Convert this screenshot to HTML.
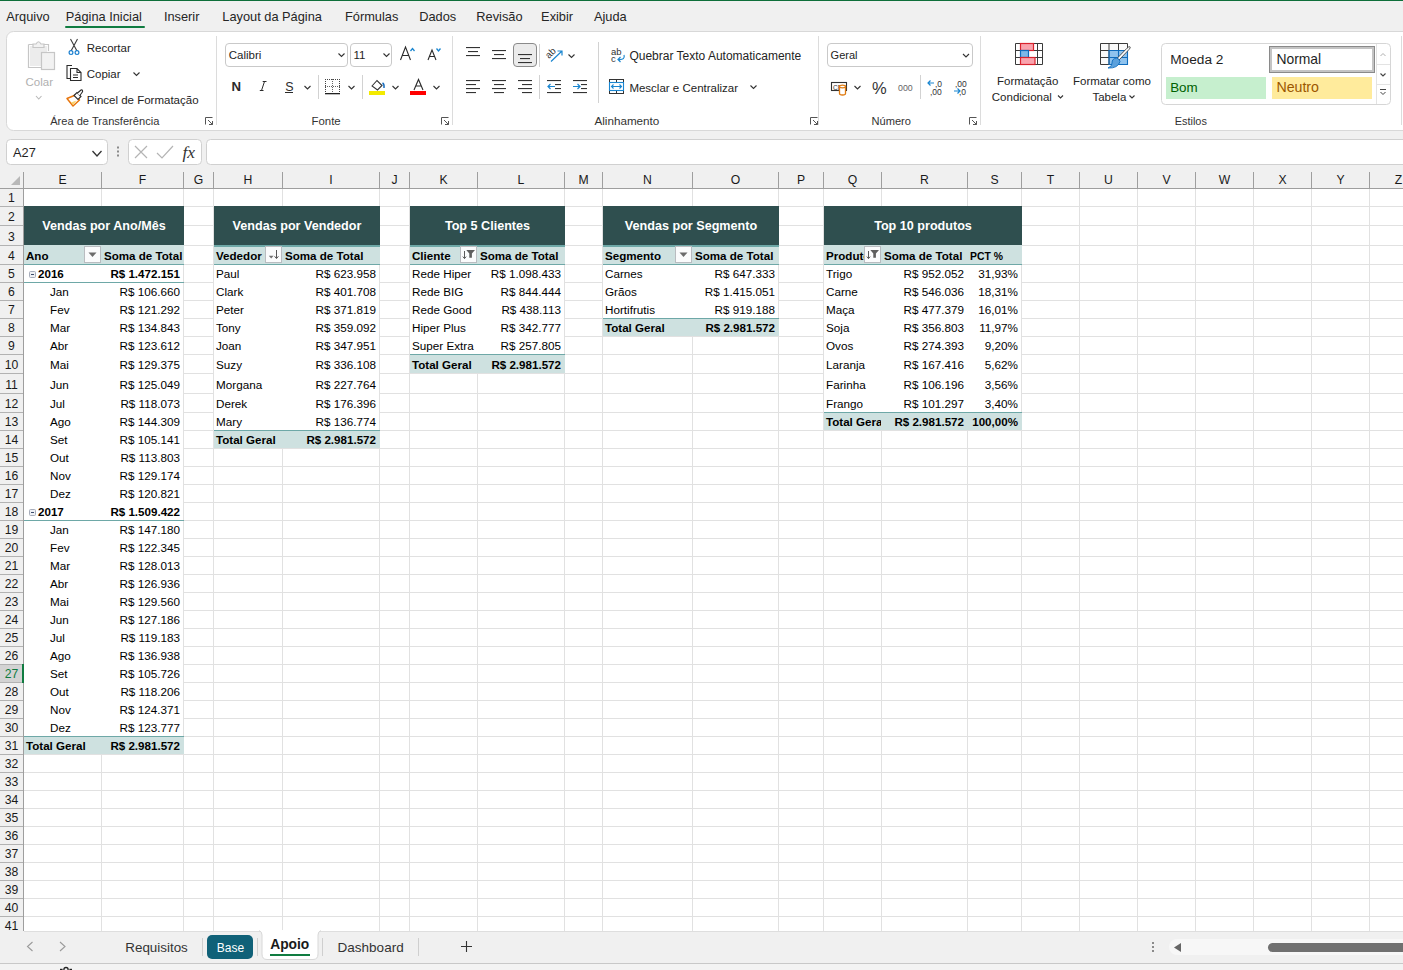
<!DOCTYPE html>
<html><head><meta charset="utf-8"><title>Excel - Apoio</title>
<style>
html,body{margin:0;padding:0;}
body{width:1403px;height:970px;overflow:hidden;position:relative;background:#f0f0f0;font-family:"Liberation Sans", sans-serif;}
.abs{position:absolute;}
svg text{font-family:"Liberation Sans", sans-serif;}
</style></head><body>
<svg class="abs" style="left:0;top:0" width="1403" height="970" viewBox="0 0 1403 970">
<g shape-rendering="crispEdges">
<rect x="24" y="189" width="1379" height="742" fill="#ffffff" />
<rect x="24" y="206" width="1379" height="1" fill="#e1e1e1" />
<rect x="24" y="225" width="1379" height="1" fill="#e1e1e1" />
<rect x="24" y="245" width="1379" height="1" fill="#e1e1e1" />
<rect x="24" y="264" width="1379" height="1" fill="#e1e1e1" />
<rect x="24" y="282" width="1379" height="1" fill="#e1e1e1" />
<rect x="24" y="300" width="1379" height="1" fill="#e1e1e1" />
<rect x="24" y="318" width="1379" height="1" fill="#e1e1e1" />
<rect x="24" y="336" width="1379" height="1" fill="#e1e1e1" />
<rect x="24" y="354" width="1379" height="1" fill="#e1e1e1" />
<rect x="24" y="373" width="1379" height="1" fill="#e1e1e1" />
<rect x="24" y="393" width="1379" height="1" fill="#e1e1e1" />
<rect x="24" y="412" width="1379" height="1" fill="#e1e1e1" />
<rect x="24" y="430" width="1379" height="1" fill="#e1e1e1" />
<rect x="24" y="448" width="1379" height="1" fill="#e1e1e1" />
<rect x="24" y="466" width="1379" height="1" fill="#e1e1e1" />
<rect x="24" y="484" width="1379" height="1" fill="#e1e1e1" />
<rect x="24" y="502" width="1379" height="1" fill="#e1e1e1" />
<rect x="24" y="520" width="1379" height="1" fill="#e1e1e1" />
<rect x="24" y="538" width="1379" height="1" fill="#e1e1e1" />
<rect x="24" y="556" width="1379" height="1" fill="#e1e1e1" />
<rect x="24" y="574" width="1379" height="1" fill="#e1e1e1" />
<rect x="24" y="592" width="1379" height="1" fill="#e1e1e1" />
<rect x="24" y="610" width="1379" height="1" fill="#e1e1e1" />
<rect x="24" y="628" width="1379" height="1" fill="#e1e1e1" />
<rect x="24" y="646" width="1379" height="1" fill="#e1e1e1" />
<rect x="24" y="664" width="1379" height="1" fill="#e1e1e1" />
<rect x="24" y="682" width="1379" height="1" fill="#e1e1e1" />
<rect x="24" y="700" width="1379" height="1" fill="#e1e1e1" />
<rect x="24" y="718" width="1379" height="1" fill="#e1e1e1" />
<rect x="24" y="736" width="1379" height="1" fill="#e1e1e1" />
<rect x="24" y="754" width="1379" height="1" fill="#e1e1e1" />
<rect x="24" y="772" width="1379" height="1" fill="#e1e1e1" />
<rect x="24" y="790" width="1379" height="1" fill="#e1e1e1" />
<rect x="24" y="808" width="1379" height="1" fill="#e1e1e1" />
<rect x="24" y="826" width="1379" height="1" fill="#e1e1e1" />
<rect x="24" y="844" width="1379" height="1" fill="#e1e1e1" />
<rect x="24" y="862" width="1379" height="1" fill="#e1e1e1" />
<rect x="24" y="880" width="1379" height="1" fill="#e1e1e1" />
<rect x="24" y="898" width="1379" height="1" fill="#e1e1e1" />
<rect x="24" y="916" width="1379" height="1" fill="#e1e1e1" />
<rect x="101" y="189" width="1" height="742" fill="#e1e1e1" />
<rect x="183" y="189" width="1" height="742" fill="#e1e1e1" />
<rect x="213" y="189" width="1" height="742" fill="#e1e1e1" />
<rect x="282" y="189" width="1" height="742" fill="#e1e1e1" />
<rect x="379" y="189" width="1" height="742" fill="#e1e1e1" />
<rect x="409" y="189" width="1" height="742" fill="#e1e1e1" />
<rect x="477" y="189" width="1" height="742" fill="#e1e1e1" />
<rect x="564" y="189" width="1" height="742" fill="#e1e1e1" />
<rect x="602" y="189" width="1" height="742" fill="#e1e1e1" />
<rect x="692" y="189" width="1" height="742" fill="#e1e1e1" />
<rect x="778" y="189" width="1" height="742" fill="#e1e1e1" />
<rect x="823" y="189" width="1" height="742" fill="#e1e1e1" />
<rect x="881" y="189" width="1" height="742" fill="#e1e1e1" />
<rect x="967" y="189" width="1" height="742" fill="#e1e1e1" />
<rect x="1021" y="189" width="1" height="742" fill="#e1e1e1" />
<rect x="1079" y="189" width="1" height="742" fill="#e1e1e1" />
<rect x="1137" y="189" width="1" height="742" fill="#e1e1e1" />
<rect x="1195" y="189" width="1" height="742" fill="#e1e1e1" />
<rect x="1253" y="189" width="1" height="742" fill="#e1e1e1" />
<rect x="1311" y="189" width="1" height="742" fill="#e1e1e1" />
<rect x="1369" y="189" width="1" height="742" fill="#e1e1e1" />
<rect x="1427" y="189" width="1" height="742" fill="#e1e1e1" />
<rect x="24" y="206" width="159" height="548" fill="#ffffff" />
<rect x="24" y="206" width="160" height="39" fill="#2f4f4f" />
<rect x="24" y="245" width="160" height="19" fill="#cee1e0" />
<rect x="24" y="736" width="160" height="18" fill="#cee1e0" />
<rect x="24" y="264" width="160" height="1" fill="#6ea8a7" />
<rect x="24" y="736" width="160" height="1" fill="#6ea8a7" />
<rect x="214" y="206" width="165" height="242" fill="#ffffff" />
<rect x="214" y="206" width="166" height="39" fill="#2f4f4f" />
<rect x="214" y="245" width="166" height="19" fill="#cee1e0" />
<rect x="214" y="430" width="166" height="18" fill="#cee1e0" />
<rect x="214" y="245" width="166" height="2" fill="#6ea8a7" />
<rect x="214" y="264" width="166" height="1" fill="#6ea8a7" />
<rect x="214" y="430" width="166" height="1" fill="#6ea8a7" />
<rect x="410" y="206" width="154" height="167" fill="#ffffff" />
<rect x="410" y="206" width="155" height="39" fill="#2f4f4f" />
<rect x="410" y="245" width="155" height="19" fill="#cee1e0" />
<rect x="410" y="354" width="155" height="19" fill="#cee1e0" />
<rect x="410" y="245" width="155" height="2" fill="#6ea8a7" />
<rect x="410" y="264" width="155" height="1" fill="#6ea8a7" />
<rect x="410" y="354" width="155" height="1" fill="#6ea8a7" />
<rect x="603" y="206" width="175" height="130" fill="#ffffff" />
<rect x="603" y="206" width="176" height="39" fill="#2f4f4f" />
<rect x="603" y="245" width="176" height="19" fill="#cee1e0" />
<rect x="603" y="318" width="176" height="18" fill="#cee1e0" />
<rect x="603" y="245" width="176" height="2" fill="#6ea8a7" />
<rect x="603" y="264" width="176" height="1" fill="#6ea8a7" />
<rect x="603" y="318" width="176" height="1" fill="#6ea8a7" />
<rect x="824" y="206" width="197" height="224" fill="#ffffff" />
<rect x="824" y="206" width="198" height="39" fill="#2f4f4f" />
<rect x="824" y="245" width="198" height="19" fill="#cee1e0" />
<rect x="824" y="412" width="198" height="18" fill="#cee1e0" />
<rect x="824" y="264" width="198" height="1" fill="#6ea8a7" />
<rect x="824" y="412" width="198" height="1" fill="#6ea8a7" />
<rect x="24" y="282" width="160" height="1" fill="#6ea8a7" />
<rect x="24" y="520" width="160" height="1" fill="#6ea8a7" />
</g>
<text x="104.0" y="230" font-size="12.6" fill="#ffffff" font-weight="bold" text-anchor="middle" >Vendas por Ano/Mês</text>
<text x="297.0" y="230" font-size="12.6" fill="#ffffff" font-weight="bold" text-anchor="middle" >Vendas por Vendedor</text>
<text x="487.5" y="230" font-size="12.6" fill="#ffffff" font-weight="bold" text-anchor="middle" >Top 5 Clientes</text>
<text x="691.0" y="230" font-size="12.6" fill="#ffffff" font-weight="bold" text-anchor="middle" >Vendas por Segmento</text>
<text x="923.0" y="230" font-size="12.6" fill="#ffffff" font-weight="bold" text-anchor="middle" >Top 10 produtos</text>
<text x="26" y="260" font-size="11.6" fill="#000" font-weight="bold" text-anchor="start" >Ano</text>
<rect x="84.5" y="246.5" width="16" height="16" fill="#fafbfc" stroke="#b9bcc0" stroke-width="1"/>
<path d="M88.5 252.5 L96.5 252.5 L92.5 257 Z" fill="#6b6b6b"/>
<text x="104" y="260" font-size="11.6" fill="#000" font-weight="bold" text-anchor="start" >Soma de Total</text>
<rect x="29.5" y="271.5" width="6" height="6" rx="1" fill="#eef0f4" stroke="#a7adbb"/>
<rect x="31" y="274" width="3" height="1" fill="#3a4a6a"/>
<text x="38" y="278" font-size="11.6" fill="#000" font-weight="bold" text-anchor="start" >2016</text>
<text x="180" y="278" font-size="11.6" fill="#000" font-weight="bold" text-anchor="end" >R$ 1.472.151</text>
<text x="50" y="296" font-size="11.7" fill="#000" text-anchor="start" >Jan</text>
<text x="180" y="296" font-size="11.7" fill="#000" text-anchor="end" >R$ 106.660</text>
<text x="50" y="314" font-size="11.7" fill="#000" text-anchor="start" >Fev</text>
<text x="180" y="314" font-size="11.7" fill="#000" text-anchor="end" >R$ 121.292</text>
<text x="50" y="332" font-size="11.7" fill="#000" text-anchor="start" >Mar</text>
<text x="180" y="332" font-size="11.7" fill="#000" text-anchor="end" >R$ 134.843</text>
<text x="50" y="350" font-size="11.7" fill="#000" text-anchor="start" >Abr</text>
<text x="180" y="350" font-size="11.7" fill="#000" text-anchor="end" >R$ 123.612</text>
<text x="50" y="369" font-size="11.7" fill="#000" text-anchor="start" >Mai</text>
<text x="180" y="369" font-size="11.7" fill="#000" text-anchor="end" >R$ 129.375</text>
<text x="50" y="389" font-size="11.7" fill="#000" text-anchor="start" >Jun</text>
<text x="180" y="389" font-size="11.7" fill="#000" text-anchor="end" >R$ 125.049</text>
<text x="50" y="408" font-size="11.7" fill="#000" text-anchor="start" >Jul</text>
<text x="180" y="408" font-size="11.7" fill="#000" text-anchor="end" >R$ 118.073</text>
<text x="50" y="426" font-size="11.7" fill="#000" text-anchor="start" >Ago</text>
<text x="180" y="426" font-size="11.7" fill="#000" text-anchor="end" >R$ 144.309</text>
<text x="50" y="444" font-size="11.7" fill="#000" text-anchor="start" >Set</text>
<text x="180" y="444" font-size="11.7" fill="#000" text-anchor="end" >R$ 105.141</text>
<text x="50" y="462" font-size="11.7" fill="#000" text-anchor="start" >Out</text>
<text x="180" y="462" font-size="11.7" fill="#000" text-anchor="end" >R$ 113.803</text>
<text x="50" y="480" font-size="11.7" fill="#000" text-anchor="start" >Nov</text>
<text x="180" y="480" font-size="11.7" fill="#000" text-anchor="end" >R$ 129.174</text>
<text x="50" y="498" font-size="11.7" fill="#000" text-anchor="start" >Dez</text>
<text x="180" y="498" font-size="11.7" fill="#000" text-anchor="end" >R$ 120.821</text>
<rect x="29.5" y="509.5" width="6" height="6" rx="1" fill="#eef0f4" stroke="#a7adbb"/>
<rect x="31" y="512" width="3" height="1" fill="#3a4a6a"/>
<text x="38" y="516" font-size="11.6" fill="#000" font-weight="bold" text-anchor="start" >2017</text>
<text x="180" y="516" font-size="11.6" fill="#000" font-weight="bold" text-anchor="end" >R$ 1.509.422</text>
<text x="50" y="534" font-size="11.7" fill="#000" text-anchor="start" >Jan</text>
<text x="180" y="534" font-size="11.7" fill="#000" text-anchor="end" >R$ 147.180</text>
<text x="50" y="552" font-size="11.7" fill="#000" text-anchor="start" >Fev</text>
<text x="180" y="552" font-size="11.7" fill="#000" text-anchor="end" >R$ 122.345</text>
<text x="50" y="570" font-size="11.7" fill="#000" text-anchor="start" >Mar</text>
<text x="180" y="570" font-size="11.7" fill="#000" text-anchor="end" >R$ 128.013</text>
<text x="50" y="588" font-size="11.7" fill="#000" text-anchor="start" >Abr</text>
<text x="180" y="588" font-size="11.7" fill="#000" text-anchor="end" >R$ 126.936</text>
<text x="50" y="606" font-size="11.7" fill="#000" text-anchor="start" >Mai</text>
<text x="180" y="606" font-size="11.7" fill="#000" text-anchor="end" >R$ 129.560</text>
<text x="50" y="624" font-size="11.7" fill="#000" text-anchor="start" >Jun</text>
<text x="180" y="624" font-size="11.7" fill="#000" text-anchor="end" >R$ 127.186</text>
<text x="50" y="642" font-size="11.7" fill="#000" text-anchor="start" >Jul</text>
<text x="180" y="642" font-size="11.7" fill="#000" text-anchor="end" >R$ 119.183</text>
<text x="50" y="660" font-size="11.7" fill="#000" text-anchor="start" >Ago</text>
<text x="180" y="660" font-size="11.7" fill="#000" text-anchor="end" >R$ 136.938</text>
<text x="50" y="678" font-size="11.7" fill="#000" text-anchor="start" >Set</text>
<text x="180" y="678" font-size="11.7" fill="#000" text-anchor="end" >R$ 105.726</text>
<text x="50" y="696" font-size="11.7" fill="#000" text-anchor="start" >Out</text>
<text x="180" y="696" font-size="11.7" fill="#000" text-anchor="end" >R$ 118.206</text>
<text x="50" y="714" font-size="11.7" fill="#000" text-anchor="start" >Nov</text>
<text x="180" y="714" font-size="11.7" fill="#000" text-anchor="end" >R$ 124.371</text>
<text x="50" y="732" font-size="11.7" fill="#000" text-anchor="start" >Dez</text>
<text x="180" y="732" font-size="11.7" fill="#000" text-anchor="end" >R$ 123.777</text>
<text x="26" y="750" font-size="11.6" fill="#000" font-weight="bold" text-anchor="start" >Total Geral</text>
<text x="180" y="750" font-size="11.6" fill="#000" font-weight="bold" text-anchor="end" >R$ 2.981.572</text>
<text x="216" y="260" font-size="11.6" fill="#000" font-weight="bold" text-anchor="start" >Vededor</text>
<rect x="265.5" y="246.5" width="16" height="16" fill="#fafbfc" stroke="#b9bcc0" stroke-width="1"/>
<path d="M268.8 255.8 L273.6 255.8 L271.2 258.6 Z" fill="#707070"/>
<rect x="276" y="250" width="1" height="8" fill="#555"/>
<path d="M274.6 256.3 L276.5 258.6 L278.4 256.3" fill="none" stroke="#555" stroke-width="1"/>
<text x="285" y="260" font-size="11.6" fill="#000" font-weight="bold" text-anchor="start" >Soma de Total</text>
<text x="216" y="278" font-size="11.7" fill="#000" text-anchor="start" >Paul</text>
<text x="376" y="278" font-size="11.7" fill="#000" text-anchor="end" >R$ 623.958</text>
<text x="216" y="296" font-size="11.7" fill="#000" text-anchor="start" >Clark</text>
<text x="376" y="296" font-size="11.7" fill="#000" text-anchor="end" >R$ 401.708</text>
<text x="216" y="314" font-size="11.7" fill="#000" text-anchor="start" >Peter</text>
<text x="376" y="314" font-size="11.7" fill="#000" text-anchor="end" >R$ 371.819</text>
<text x="216" y="332" font-size="11.7" fill="#000" text-anchor="start" >Tony</text>
<text x="376" y="332" font-size="11.7" fill="#000" text-anchor="end" >R$ 359.092</text>
<text x="216" y="350" font-size="11.7" fill="#000" text-anchor="start" >Joan</text>
<text x="376" y="350" font-size="11.7" fill="#000" text-anchor="end" >R$ 347.951</text>
<text x="216" y="369" font-size="11.7" fill="#000" text-anchor="start" >Suzy</text>
<text x="376" y="369" font-size="11.7" fill="#000" text-anchor="end" >R$ 336.108</text>
<text x="216" y="389" font-size="11.7" fill="#000" text-anchor="start" >Morgana</text>
<text x="376" y="389" font-size="11.7" fill="#000" text-anchor="end" >R$ 227.764</text>
<text x="216" y="408" font-size="11.7" fill="#000" text-anchor="start" >Derek</text>
<text x="376" y="408" font-size="11.7" fill="#000" text-anchor="end" >R$ 176.396</text>
<text x="216" y="426" font-size="11.7" fill="#000" text-anchor="start" >Mary</text>
<text x="376" y="426" font-size="11.7" fill="#000" text-anchor="end" >R$ 136.774</text>
<text x="216" y="444" font-size="11.6" fill="#000" font-weight="bold" text-anchor="start" >Total Geral</text>
<text x="376" y="444" font-size="11.6" fill="#000" font-weight="bold" text-anchor="end" >R$ 2.981.572</text>
<text x="412" y="260" font-size="11.6" fill="#000" font-weight="bold" text-anchor="start" >Cliente</text>
<rect x="460.5" y="246.5" width="16" height="16" fill="#fafbfc" stroke="#b9bcc0" stroke-width="1"/>
<rect x="464" y="251" width="1" height="7.5" fill="#5a5a5a"/>
<path d="M462.8 256.6 L464.5 258.6 L466.2 256.6" fill="none" stroke="#5a5a5a" stroke-width="1"/>
<path d="M466.3 250 L475 250 L471.9 253.5 L471.9 257.8 L469.3 257.8 L469.3 253.5 Z" fill="#5e5e5e"/>
<text x="480" y="260" font-size="11.6" fill="#000" font-weight="bold" text-anchor="start" >Soma de Total</text>
<text x="412" y="278" font-size="11.7" fill="#000" text-anchor="start" >Rede Hiper</text>
<text x="561" y="278" font-size="11.7" fill="#000" text-anchor="end" >R$ 1.098.433</text>
<text x="412" y="296" font-size="11.7" fill="#000" text-anchor="start" >Rede BIG</text>
<text x="561" y="296" font-size="11.7" fill="#000" text-anchor="end" >R$ 844.444</text>
<text x="412" y="314" font-size="11.7" fill="#000" text-anchor="start" >Rede Good</text>
<text x="561" y="314" font-size="11.7" fill="#000" text-anchor="end" >R$ 438.113</text>
<text x="412" y="332" font-size="11.7" fill="#000" text-anchor="start" >Hiper Plus</text>
<text x="561" y="332" font-size="11.7" fill="#000" text-anchor="end" >R$ 342.777</text>
<text x="412" y="350" font-size="11.7" fill="#000" text-anchor="start" >Super Extra</text>
<text x="561" y="350" font-size="11.7" fill="#000" text-anchor="end" >R$ 257.805</text>
<text x="412" y="369" font-size="11.6" fill="#000" font-weight="bold" text-anchor="start" >Total Geral</text>
<text x="561" y="369" font-size="11.6" fill="#000" font-weight="bold" text-anchor="end" >R$ 2.981.572</text>
<text x="605" y="260" font-size="11.6" fill="#000" font-weight="bold" text-anchor="start" >Segmento</text>
<rect x="675.5" y="246.5" width="16" height="16" fill="#fafbfc" stroke="#b9bcc0" stroke-width="1"/>
<path d="M679.5 252.5 L687.5 252.5 L683.5 257 Z" fill="#6b6b6b"/>
<text x="695" y="260" font-size="11.6" fill="#000" font-weight="bold" text-anchor="start" >Soma de Total</text>
<text x="605" y="278" font-size="11.7" fill="#000" text-anchor="start" >Carnes</text>
<text x="775" y="278" font-size="11.7" fill="#000" text-anchor="end" >R$ 647.333</text>
<text x="605" y="296" font-size="11.7" fill="#000" text-anchor="start" >Grãos</text>
<text x="775" y="296" font-size="11.7" fill="#000" text-anchor="end" >R$ 1.415.051</text>
<text x="605" y="314" font-size="11.7" fill="#000" text-anchor="start" >Hortifrutis</text>
<text x="775" y="314" font-size="11.7" fill="#000" text-anchor="end" >R$ 919.188</text>
<text x="605" y="332" font-size="11.6" fill="#000" font-weight="bold" text-anchor="start" >Total Geral</text>
<text x="775" y="332" font-size="11.6" fill="#000" font-weight="bold" text-anchor="end" >R$ 2.981.572</text>
<clipPath id="cq"><rect x="824" y="250" width="40" height="20"/></clipPath>
<g clip-path="url(#cq)">
<text x="826" y="260" font-size="11.6" fill="#000" font-weight="bold" text-anchor="start" >Produto</text>
</g>
<rect x="864.5" y="246.5" width="16" height="16" fill="#fafbfc" stroke="#b9bcc0" stroke-width="1"/>
<rect x="868" y="251" width="1" height="7.5" fill="#5a5a5a"/>
<path d="M866.8 256.6 L868.5 258.6 L870.2 256.6" fill="none" stroke="#5a5a5a" stroke-width="1"/>
<path d="M870.3 250 L879 250 L875.9 253.5 L875.9 257.8 L873.3 257.8 L873.3 253.5 Z" fill="#5e5e5e"/>
<text x="884" y="260" font-size="11.6" fill="#000" font-weight="bold" text-anchor="start" >Soma de Total</text>
<text x="970" y="260" font-size="10.4" fill="#000" font-weight="bold" text-anchor="start" >PCT %</text>
<text x="826" y="278" font-size="11.7" fill="#000" text-anchor="start" >Trigo</text>
<text x="964" y="278" font-size="11.7" fill="#000" text-anchor="end" >R$ 952.052</text>
<text x="1018" y="278" font-size="11.7" fill="#000" text-anchor="end" >31,93%</text>
<text x="826" y="296" font-size="11.7" fill="#000" text-anchor="start" >Carne</text>
<text x="964" y="296" font-size="11.7" fill="#000" text-anchor="end" >R$ 546.036</text>
<text x="1018" y="296" font-size="11.7" fill="#000" text-anchor="end" >18,31%</text>
<text x="826" y="314" font-size="11.7" fill="#000" text-anchor="start" >Maça</text>
<text x="964" y="314" font-size="11.7" fill="#000" text-anchor="end" >R$ 477.379</text>
<text x="1018" y="314" font-size="11.7" fill="#000" text-anchor="end" >16,01%</text>
<text x="826" y="332" font-size="11.7" fill="#000" text-anchor="start" >Soja</text>
<text x="964" y="332" font-size="11.7" fill="#000" text-anchor="end" >R$ 356.803</text>
<text x="1018" y="332" font-size="11.7" fill="#000" text-anchor="end" >11,97%</text>
<text x="826" y="350" font-size="11.7" fill="#000" text-anchor="start" >Ovos</text>
<text x="964" y="350" font-size="11.7" fill="#000" text-anchor="end" >R$ 274.393</text>
<text x="1018" y="350" font-size="11.7" fill="#000" text-anchor="end" >9,20%</text>
<text x="826" y="369" font-size="11.7" fill="#000" text-anchor="start" >Laranja</text>
<text x="964" y="369" font-size="11.7" fill="#000" text-anchor="end" >R$ 167.416</text>
<text x="1018" y="369" font-size="11.7" fill="#000" text-anchor="end" >5,62%</text>
<text x="826" y="389" font-size="11.7" fill="#000" text-anchor="start" >Farinha</text>
<text x="964" y="389" font-size="11.7" fill="#000" text-anchor="end" >R$ 106.196</text>
<text x="1018" y="389" font-size="11.7" fill="#000" text-anchor="end" >3,56%</text>
<text x="826" y="408" font-size="11.7" fill="#000" text-anchor="start" >Frango</text>
<text x="964" y="408" font-size="11.7" fill="#000" text-anchor="end" >R$ 101.297</text>
<text x="1018" y="408" font-size="11.7" fill="#000" text-anchor="end" >3,40%</text>
<clipPath id="cq2"><rect x="824" y="737" width="57" height="20"/></clipPath>
<clipPath id="cq3"><rect x="824" y="413" width="57" height="18"/></clipPath>
<g clip-path="url(#cq3)">
<text x="826" y="426" font-size="11.6" fill="#000" font-weight="bold" text-anchor="start" >Total Geral</text>
</g>
<text x="964" y="426" font-size="11.6" fill="#000" font-weight="bold" text-anchor="end" >R$ 2.981.572</text>
<text x="1018" y="426" font-size="11.6" fill="#000" font-weight="bold" text-anchor="end" >100,00%</text>
<g shape-rendering="crispEdges">
<rect x="0" y="165" width="1403" height="23" fill="#f0f0f0" />
<rect x="0" y="188" width="1403" height="1" fill="#9e9e9e" />
<rect x="101" y="172" width="1" height="16" fill="#9e9e9e" />
<rect x="183" y="172" width="1" height="16" fill="#9e9e9e" />
<rect x="213" y="172" width="1" height="16" fill="#9e9e9e" />
<rect x="282" y="172" width="1" height="16" fill="#9e9e9e" />
<rect x="379" y="172" width="1" height="16" fill="#9e9e9e" />
<rect x="409" y="172" width="1" height="16" fill="#9e9e9e" />
<rect x="477" y="172" width="1" height="16" fill="#9e9e9e" />
<rect x="564" y="172" width="1" height="16" fill="#9e9e9e" />
<rect x="602" y="172" width="1" height="16" fill="#9e9e9e" />
<rect x="692" y="172" width="1" height="16" fill="#9e9e9e" />
<rect x="778" y="172" width="1" height="16" fill="#9e9e9e" />
<rect x="823" y="172" width="1" height="16" fill="#9e9e9e" />
<rect x="881" y="172" width="1" height="16" fill="#9e9e9e" />
<rect x="967" y="172" width="1" height="16" fill="#9e9e9e" />
<rect x="1021" y="172" width="1" height="16" fill="#9e9e9e" />
<rect x="1079" y="172" width="1" height="16" fill="#9e9e9e" />
<rect x="1137" y="172" width="1" height="16" fill="#9e9e9e" />
<rect x="1195" y="172" width="1" height="16" fill="#9e9e9e" />
<rect x="1253" y="172" width="1" height="16" fill="#9e9e9e" />
<rect x="1311" y="172" width="1" height="16" fill="#9e9e9e" />
<rect x="1369" y="172" width="1" height="16" fill="#9e9e9e" />
<rect x="1427" y="172" width="1" height="16" fill="#9e9e9e" />
<rect x="0" y="189" width="23" height="742" fill="#f0f0f0" />
<rect x="23" y="172" width="1" height="759" fill="#9e9e9e" />
<rect x="0" y="206" width="23" height="1" fill="#b2b2b2" />
<rect x="0" y="225" width="23" height="1" fill="#b2b2b2" />
<rect x="0" y="245" width="23" height="1" fill="#b2b2b2" />
<rect x="0" y="264" width="23" height="1" fill="#b2b2b2" />
<rect x="0" y="282" width="23" height="1" fill="#b2b2b2" />
<rect x="0" y="300" width="23" height="1" fill="#b2b2b2" />
<rect x="0" y="318" width="23" height="1" fill="#b2b2b2" />
<rect x="0" y="336" width="23" height="1" fill="#b2b2b2" />
<rect x="0" y="354" width="23" height="1" fill="#b2b2b2" />
<rect x="0" y="373" width="23" height="1" fill="#b2b2b2" />
<rect x="0" y="393" width="23" height="1" fill="#b2b2b2" />
<rect x="0" y="412" width="23" height="1" fill="#b2b2b2" />
<rect x="0" y="430" width="23" height="1" fill="#b2b2b2" />
<rect x="0" y="448" width="23" height="1" fill="#b2b2b2" />
<rect x="0" y="466" width="23" height="1" fill="#b2b2b2" />
<rect x="0" y="484" width="23" height="1" fill="#b2b2b2" />
<rect x="0" y="502" width="23" height="1" fill="#b2b2b2" />
<rect x="0" y="520" width="23" height="1" fill="#b2b2b2" />
<rect x="0" y="538" width="23" height="1" fill="#b2b2b2" />
<rect x="0" y="556" width="23" height="1" fill="#b2b2b2" />
<rect x="0" y="574" width="23" height="1" fill="#b2b2b2" />
<rect x="0" y="592" width="23" height="1" fill="#b2b2b2" />
<rect x="0" y="610" width="23" height="1" fill="#b2b2b2" />
<rect x="0" y="628" width="23" height="1" fill="#b2b2b2" />
<rect x="0" y="646" width="23" height="1" fill="#b2b2b2" />
<rect x="0" y="664" width="23" height="1" fill="#b2b2b2" />
<rect x="0" y="682" width="23" height="1" fill="#b2b2b2" />
<rect x="0" y="700" width="23" height="1" fill="#b2b2b2" />
<rect x="0" y="718" width="23" height="1" fill="#b2b2b2" />
<rect x="0" y="736" width="23" height="1" fill="#b2b2b2" />
<rect x="0" y="754" width="23" height="1" fill="#b2b2b2" />
<rect x="0" y="772" width="23" height="1" fill="#b2b2b2" />
<rect x="0" y="790" width="23" height="1" fill="#b2b2b2" />
<rect x="0" y="808" width="23" height="1" fill="#b2b2b2" />
<rect x="0" y="826" width="23" height="1" fill="#b2b2b2" />
<rect x="0" y="844" width="23" height="1" fill="#b2b2b2" />
<rect x="0" y="862" width="23" height="1" fill="#b2b2b2" />
<rect x="0" y="880" width="23" height="1" fill="#b2b2b2" />
<rect x="0" y="898" width="23" height="1" fill="#b2b2b2" />
<rect x="0" y="916" width="23" height="1" fill="#b2b2b2" />
<rect x="0" y="665" width="22" height="17" fill="#d3d3d3" />
<rect x="22" y="664" width="2" height="19" fill="#107c41" />
</g>
<path d="M11 185 L20 185 L20 176 Z" fill="#b8b8b8"/>
<text x="62.5" y="184" font-size="12.2" fill="#1a1a1a" text-anchor="middle" >E</text>
<text x="142.5" y="184" font-size="12.2" fill="#1a1a1a" text-anchor="middle" >F</text>
<text x="198.5" y="184" font-size="12.2" fill="#1a1a1a" text-anchor="middle" >G</text>
<text x="248.0" y="184" font-size="12.2" fill="#1a1a1a" text-anchor="middle" >H</text>
<text x="331.0" y="184" font-size="12.2" fill="#1a1a1a" text-anchor="middle" >I</text>
<text x="394.5" y="184" font-size="12.2" fill="#1a1a1a" text-anchor="middle" >J</text>
<text x="443.5" y="184" font-size="12.2" fill="#1a1a1a" text-anchor="middle" >K</text>
<text x="521.0" y="184" font-size="12.2" fill="#1a1a1a" text-anchor="middle" >L</text>
<text x="583.5" y="184" font-size="12.2" fill="#1a1a1a" text-anchor="middle" >M</text>
<text x="647.5" y="184" font-size="12.2" fill="#1a1a1a" text-anchor="middle" >N</text>
<text x="735.5" y="184" font-size="12.2" fill="#1a1a1a" text-anchor="middle" >O</text>
<text x="801.0" y="184" font-size="12.2" fill="#1a1a1a" text-anchor="middle" >P</text>
<text x="852.5" y="184" font-size="12.2" fill="#1a1a1a" text-anchor="middle" >Q</text>
<text x="924.5" y="184" font-size="12.2" fill="#1a1a1a" text-anchor="middle" >R</text>
<text x="994.5" y="184" font-size="12.2" fill="#1a1a1a" text-anchor="middle" >S</text>
<text x="1050.5" y="184" font-size="12.2" fill="#1a1a1a" text-anchor="middle" >T</text>
<text x="1108.5" y="184" font-size="12.2" fill="#1a1a1a" text-anchor="middle" >U</text>
<text x="1166.5" y="184" font-size="12.2" fill="#1a1a1a" text-anchor="middle" >V</text>
<text x="1224.5" y="184" font-size="12.2" fill="#1a1a1a" text-anchor="middle" >W</text>
<text x="1282.5" y="184" font-size="12.2" fill="#1a1a1a" text-anchor="middle" >X</text>
<text x="1340.5" y="184" font-size="12.2" fill="#1a1a1a" text-anchor="middle" >Y</text>
<text x="1398.5" y="184" font-size="12.2" fill="#1a1a1a" text-anchor="middle" >Z</text>
<text x="11.5" y="202" font-size="12.2" fill="#1a1a1a" text-anchor="middle" >1</text>
<text x="11.5" y="221" font-size="12.2" fill="#1a1a1a" text-anchor="middle" >2</text>
<text x="11.5" y="241" font-size="12.2" fill="#1a1a1a" text-anchor="middle" >3</text>
<text x="11.5" y="260" font-size="12.2" fill="#1a1a1a" text-anchor="middle" >4</text>
<text x="11.5" y="278" font-size="12.2" fill="#1a1a1a" text-anchor="middle" >5</text>
<text x="11.5" y="296" font-size="12.2" fill="#1a1a1a" text-anchor="middle" >6</text>
<text x="11.5" y="314" font-size="12.2" fill="#1a1a1a" text-anchor="middle" >7</text>
<text x="11.5" y="332" font-size="12.2" fill="#1a1a1a" text-anchor="middle" >8</text>
<text x="11.5" y="350" font-size="12.2" fill="#1a1a1a" text-anchor="middle" >9</text>
<text x="11.5" y="369" font-size="12.2" fill="#1a1a1a" text-anchor="middle" >10</text>
<text x="11.5" y="389" font-size="12.2" fill="#1a1a1a" text-anchor="middle" >11</text>
<text x="11.5" y="408" font-size="12.2" fill="#1a1a1a" text-anchor="middle" >12</text>
<text x="11.5" y="426" font-size="12.2" fill="#1a1a1a" text-anchor="middle" >13</text>
<text x="11.5" y="444" font-size="12.2" fill="#1a1a1a" text-anchor="middle" >14</text>
<text x="11.5" y="462" font-size="12.2" fill="#1a1a1a" text-anchor="middle" >15</text>
<text x="11.5" y="480" font-size="12.2" fill="#1a1a1a" text-anchor="middle" >16</text>
<text x="11.5" y="498" font-size="12.2" fill="#1a1a1a" text-anchor="middle" >17</text>
<text x="11.5" y="516" font-size="12.2" fill="#1a1a1a" text-anchor="middle" >18</text>
<text x="11.5" y="534" font-size="12.2" fill="#1a1a1a" text-anchor="middle" >19</text>
<text x="11.5" y="552" font-size="12.2" fill="#1a1a1a" text-anchor="middle" >20</text>
<text x="11.5" y="570" font-size="12.2" fill="#1a1a1a" text-anchor="middle" >21</text>
<text x="11.5" y="588" font-size="12.2" fill="#1a1a1a" text-anchor="middle" >22</text>
<text x="11.5" y="606" font-size="12.2" fill="#1a1a1a" text-anchor="middle" >23</text>
<text x="11.5" y="624" font-size="12.2" fill="#1a1a1a" text-anchor="middle" >24</text>
<text x="11.5" y="642" font-size="12.2" fill="#1a1a1a" text-anchor="middle" >25</text>
<text x="11.5" y="660" font-size="12.2" fill="#1a1a1a" text-anchor="middle" >26</text>
<text x="11.5" y="678" font-size="12.2" fill="#107c41" text-anchor="middle" >27</text>
<text x="11.5" y="696" font-size="12.2" fill="#1a1a1a" text-anchor="middle" >28</text>
<text x="11.5" y="714" font-size="12.2" fill="#1a1a1a" text-anchor="middle" >29</text>
<text x="11.5" y="732" font-size="12.2" fill="#1a1a1a" text-anchor="middle" >30</text>
<text x="11.5" y="750" font-size="12.2" fill="#1a1a1a" text-anchor="middle" >31</text>
<text x="11.5" y="768" font-size="12.2" fill="#1a1a1a" text-anchor="middle" >32</text>
<text x="11.5" y="786" font-size="12.2" fill="#1a1a1a" text-anchor="middle" >33</text>
<text x="11.5" y="804" font-size="12.2" fill="#1a1a1a" text-anchor="middle" >34</text>
<text x="11.5" y="822" font-size="12.2" fill="#1a1a1a" text-anchor="middle" >35</text>
<text x="11.5" y="840" font-size="12.2" fill="#1a1a1a" text-anchor="middle" >36</text>
<text x="11.5" y="858" font-size="12.2" fill="#1a1a1a" text-anchor="middle" >37</text>
<text x="11.5" y="876" font-size="12.2" fill="#1a1a1a" text-anchor="middle" >38</text>
<text x="11.5" y="894" font-size="12.2" fill="#1a1a1a" text-anchor="middle" >39</text>
<text x="11.5" y="912" font-size="12.2" fill="#1a1a1a" text-anchor="middle" >40</text>
<text x="11.5" y="930" font-size="12.2" fill="#1a1a1a" text-anchor="middle" >41</text>
<g shape-rendering="crispEdges">
<rect x="0" y="0" width="1403" height="1" fill="#0e6f3a" />
</g>
<text x="6.3" y="21" font-size="12.8" fill="#262626" text-anchor="start" >Arquivo</text>
<text x="65.8" y="21" font-size="12.8" fill="#262626" text-anchor="start" >Página Inicial</text>
<text x="163.9" y="21" font-size="12.8" fill="#262626" text-anchor="start" >Inserir</text>
<text x="222.3" y="21" font-size="12.8" fill="#262626" text-anchor="start" >Layout da Página</text>
<text x="345" y="21" font-size="12.8" fill="#262626" text-anchor="start" >Fórmulas</text>
<text x="419.2" y="21" font-size="12.8" fill="#262626" text-anchor="start" >Dados</text>
<text x="476.3" y="21" font-size="12.8" fill="#262626" text-anchor="start" >Revisão</text>
<text x="541.1" y="21" font-size="12.8" fill="#262626" text-anchor="start" >Exibir</text>
<text x="593.9" y="21" font-size="12.8" fill="#262626" text-anchor="start" >Ajuda</text>
<rect x="65" y="26" width="80" height="2" rx="1" fill="#107c41"/>
<rect x="6.5" y="31.5" width="1420" height="99" rx="7" fill="#ffffff" stroke="#d8d8d8"/>
<g shape-rendering="crispEdges">
<rect x="216" y="36" width="1" height="89" fill="#dcdcdc" />
<rect x="452" y="36" width="1" height="89" fill="#dcdcdc" />
<rect x="818" y="36" width="1" height="89" fill="#dcdcdc" />
<rect x="980" y="36" width="1" height="89" fill="#dcdcdc" />
<rect x="1401" y="36" width="1" height="89" fill="#dcdcdc" />
</g>
<text x="50.2" y="124.5" font-size="11.1" fill="#333333" text-anchor="start" >Área de Transferência</text>
<text x="311.5" y="124.5" font-size="11.4" fill="#333333" text-anchor="start" >Fonte</text>
<text x="594.4" y="124.5" font-size="11.7" fill="#333333" text-anchor="start" >Alinhamento</text>
<text x="871.5" y="124.5" font-size="11.1" fill="#333333" text-anchor="start" >Número</text>
<text x="1174.8" y="124.5" font-size="10.9" fill="#333333" text-anchor="start" >Estilos</text>
<path d="M205.5 124.5 L205.5 117.5 L212.5 117.5" fill="none" stroke="#555" stroke-width="1"/>
<path d="M208 120 L212.5 124.5 M209 124.5 L212.5 124.5 L212.5 121" fill="none" stroke="#555" stroke-width="1"/>
<path d="M441.5 124.5 L441.5 117.5 L448.5 117.5" fill="none" stroke="#555" stroke-width="1"/>
<path d="M444 120 L448.5 124.5 M445 124.5 L448.5 124.5 L448.5 121" fill="none" stroke="#555" stroke-width="1"/>
<path d="M810.5 124.5 L810.5 117.5 L817.5 117.5" fill="none" stroke="#555" stroke-width="1"/>
<path d="M813 120 L817.5 124.5 M814 124.5 L817.5 124.5 L817.5 121" fill="none" stroke="#555" stroke-width="1"/>
<path d="M969.5 124.5 L969.5 117.5 L976.5 117.5" fill="none" stroke="#555" stroke-width="1"/>
<path d="M972 120 L976.5 124.5 M973 124.5 L976.5 124.5 L976.5 121" fill="none" stroke="#555" stroke-width="1"/>
<path d="M28.5 44.5 H33 M44 44.5 H48.5 V51" fill="none" stroke="#c6c6c6" stroke-width="1.2"/>
<path d="M28.5 44.5 V67.5 H41" fill="none" stroke="#c6c6c6" stroke-width="1.2"/>
<rect x="30" y="46" width="17" height="20" fill="#ececec"/>
<rect x="41.5" y="52.5" width="13" height="17" fill="#f2f2f2" stroke="#c6c6c6" stroke-width="1.2"/>
<path d="M33 47.5 V44 H36 Q38.5 39.5 41 44 H44 V47.5 Z" fill="#f2f2f2" stroke="#c6c6c6" stroke-width="1.2"/>
<text x="25.5" y="85.5" font-size="11.5" fill="#b0b0b0" text-anchor="start" >Colar</text>
<path d="M36 96 L38.75 99 L41.5 96" fill="none" stroke="#b8b8b8" stroke-width="1.1"/>
<path d="M70.5 39 L77 51 M77.5 39 L71 51" stroke="#3c3c3c" stroke-width="1.1" fill="none"/>
<circle cx="71" cy="52.6" r="1.9" fill="none" stroke="#1a7fd0" stroke-width="1.2"/>
<circle cx="77" cy="52.6" r="1.9" fill="none" stroke="#1a7fd0" stroke-width="1.2"/>
<text x="86.7" y="51.7" font-size="11.5" fill="#242424" text-anchor="start" >Recortar</text>
<path d="M72 65.5 H67 V78.5 H70" fill="none" stroke="#2b2b2b" stroke-width="1.1"/>
<path d="M70.5 68.5 H77 L81 72.5 V80.5 H70.5 Z M77 68.5 V72.5 H81" fill="#fff" stroke="#2b2b2b" stroke-width="1.1"/>
<path d="M73 75 H78 M73 77.5 H78" stroke="#2b2b2b" stroke-width="1"/>
<text x="86.7" y="77.6" font-size="11.5" fill="#242424" text-anchor="start" >Copiar</text>
<path d="M133.5 72.5 L136.5 75.5 L139.5 72.5" fill="none" stroke="#333" stroke-width="1.1"/>
<path d="M67 98.5 L75.5 95 L79.5 100 L73 106 Z" fill="#fff" stroke="#e8750c" stroke-width="1.5" stroke-linejoin="round"/>
<path d="M71 102.5 L76.5 100.5 L73 105 Z" fill="#f9d36b"/>
<path d="M74 95.5 L77 92.5 L81 96.5 L78 99.5 Z" fill="#fff" stroke="#2b2b2b" stroke-width="1.1"/>
<path d="M77.5 93 L81 90 Q82 89.5 82.5 90.5 Q83 91.5 82 92.5 L79.5 96" fill="#fff" stroke="#2b2b2b" stroke-width="1.1"/>
<text x="86.7" y="103.5" font-size="11.5" fill="#242424" text-anchor="start" >Pincel de Formatação</text>
<rect x="225.5" y="43.5" width="122" height="23" rx="3.5" fill="#fff" stroke="#c9c9c9"/>
<text x="228.7" y="59" font-size="11.5" fill="#242424" text-anchor="start" >Calibri</text>
<path d="M338.5 53.5 L341.5 56.5 L344.5 53.5" fill="none" stroke="#333" stroke-width="1.1"/>
<rect x="350.5" y="43.5" width="41" height="23" rx="3.5" fill="#fff" stroke="#c9c9c9"/>
<text x="353.5" y="59" font-size="11.5" fill="#242424" text-anchor="start" >11</text>
<path d="M383.5 53.5 L386.5 56.5 L389.5 53.5" fill="none" stroke="#333" stroke-width="1.1"/>
<path d="M400.5 60 L405.5 47 L410.5 60 M402.3 55.5 H408.7" fill="none" stroke="#2b2b2b" stroke-width="1.1"/>
<path d="M410.5 51 L412.5 48.5 L414.5 51" fill="none" stroke="#1a86d0" stroke-width="1.3"/>
<path d="M428 60 L432 50 L436 60 M429.5 56.5 H434.5" fill="none" stroke="#2b2b2b" stroke-width="1.1"/>
<path d="M436.5 48.5 L438.5 51 L440.5 48.5" fill="none" stroke="#1a86d0" stroke-width="1.3"/>
<text x="231.5" y="91" font-size="13.2" fill="#2b2b2b" font-weight="bold" text-anchor="start" >N</text>
<path d="M261.5 90.5 L264.5 81.5 M259.8 90.5 H263.5 M262.7 81.5 H266.5" fill="none" stroke="#2b2b2b" stroke-width="1"/>
<text x="285.3" y="90.5" font-size="12.5" fill="#2b2b2b" text-anchor="start" >S</text>
<rect x="285" y="92" width="8" height="1" fill="#2b2b2b"/>
<path d="M304.5 86 L307.5 89 L310.5 86" fill="none" stroke="#333" stroke-width="1.1"/>
<g shape-rendering="crispEdges">
<rect x="318" y="75" width="1" height="24" fill="#d2d2d2" />
<rect x="362" y="75" width="1" height="24" fill="#d2d2d2" />
</g>
<rect x="325" y="79" width="1" height="1" fill="#444"/>
<rect x="325" y="86" width="1" height="1" fill="#666"/>
<rect x="327" y="79" width="1" height="1" fill="#444"/>
<rect x="327" y="86" width="1" height="1" fill="#666"/>
<rect x="329" y="79" width="1" height="1" fill="#444"/>
<rect x="329" y="86" width="1" height="1" fill="#666"/>
<rect x="331" y="79" width="1" height="1" fill="#444"/>
<rect x="331" y="86" width="1" height="1" fill="#666"/>
<rect x="333" y="79" width="1" height="1" fill="#444"/>
<rect x="333" y="86" width="1" height="1" fill="#666"/>
<rect x="335" y="79" width="1" height="1" fill="#444"/>
<rect x="335" y="86" width="1" height="1" fill="#666"/>
<rect x="337" y="79" width="1" height="1" fill="#444"/>
<rect x="337" y="86" width="1" height="1" fill="#666"/>
<rect x="339" y="79" width="1" height="1" fill="#444"/>
<rect x="339" y="86" width="1" height="1" fill="#666"/>
<rect x="325" y="79" width="1" height="1" fill="#444"/>
<rect x="339" y="79" width="1" height="1" fill="#444"/>
<rect x="332" y="79" width="1" height="1" fill="#666"/>
<rect x="325" y="81" width="1" height="1" fill="#444"/>
<rect x="339" y="81" width="1" height="1" fill="#444"/>
<rect x="332" y="81" width="1" height="1" fill="#666"/>
<rect x="325" y="83" width="1" height="1" fill="#444"/>
<rect x="339" y="83" width="1" height="1" fill="#444"/>
<rect x="332" y="83" width="1" height="1" fill="#666"/>
<rect x="325" y="85" width="1" height="1" fill="#444"/>
<rect x="339" y="85" width="1" height="1" fill="#444"/>
<rect x="332" y="85" width="1" height="1" fill="#666"/>
<rect x="325" y="87" width="1" height="1" fill="#444"/>
<rect x="339" y="87" width="1" height="1" fill="#444"/>
<rect x="332" y="87" width="1" height="1" fill="#666"/>
<rect x="325" y="89" width="1" height="1" fill="#444"/>
<rect x="339" y="89" width="1" height="1" fill="#444"/>
<rect x="332" y="89" width="1" height="1" fill="#666"/>
<rect x="325" y="91" width="1" height="1" fill="#444"/>
<rect x="339" y="91" width="1" height="1" fill="#444"/>
<rect x="332" y="91" width="1" height="1" fill="#666"/>
<rect x="325" y="93" width="15" height="1.3" fill="#222"/>
<path d="M348.5 86 L351.5 89 L354.5 86" fill="none" stroke="#333" stroke-width="1.1"/>
<path d="M372 86 L377 80.5 L382 85.5 L377.5 90 Z" fill="#fff" stroke="#333" stroke-width="1.1"/>
<path d="M382.5 83 Q384.5 84 384 88" fill="none" stroke="#1a6fc0" stroke-width="1.5"/>
<rect x="369" y="91" width="16" height="4" fill="#f3ea00"/>
<path d="M392.5 86 L395.5 89 L398.5 86" fill="none" stroke="#333" stroke-width="1.1"/>
<path d="M414 90 L418.5 79.5 L423 90 M415.7 86 H421.3" fill="none" stroke="#2b2b2b" stroke-width="1.1"/>
<rect x="410" y="91" width="16" height="4" fill="#ff0000"/>
<path d="M433.5 86 L436.5 89 L439.5 86" fill="none" stroke="#333" stroke-width="1.1"/>
<rect x="466" y="47" width="14" height="1.1" fill="#333"/>
<rect x="468" y="51" width="10" height="1.1" fill="#333"/>
<rect x="466" y="55" width="14" height="1.1" fill="#333"/>
<rect x="492" y="50" width="14" height="1.1" fill="#333"/>
<rect x="494" y="54" width="10" height="1.1" fill="#333"/>
<rect x="492" y="58" width="14" height="1.1" fill="#333"/>
<rect x="513.5" y="43.5" width="23" height="23" rx="3.5" fill="#ebebeb" stroke="#8a8a8a"/>
<rect x="518" y="54" width="14" height="1.1" fill="#333"/>
<rect x="520" y="58" width="10" height="1.1" fill="#333"/>
<rect x="518" y="62" width="14" height="1.1" fill="#333"/>
<g shape-rendering="crispEdges">
<rect x="539" y="44" width="1" height="23" fill="#d2d2d2" />
<rect x="539" y="75" width="1" height="24" fill="#d2d2d2" />
<rect x="598" y="42" width="1" height="61" fill="#d2d2d2" />
</g>
<text x="0" y="0" font-size="9.5" fill="#333" transform="translate(549 59) rotate(-45)">ab</text>
<path d="M551 61.5 L562 51 M557.5 51 H562 V55.5" fill="none" stroke="#1a86d0" stroke-width="1.2"/>
<path d="M568.5 54.5 L571.5 57.5 L574.5 54.5" fill="none" stroke="#333" stroke-width="1.1"/>
<rect x="466" y="80" width="14" height="1.1" fill="#333"/>
<rect x="466" y="84" width="10" height="1.1" fill="#333"/>
<rect x="466" y="88" width="14" height="1.1" fill="#333"/>
<rect x="466" y="92" width="10" height="1.1" fill="#333"/>
<rect x="492" y="80" width="14" height="1.1" fill="#333"/>
<rect x="494" y="84" width="10" height="1.1" fill="#333"/>
<rect x="492" y="88" width="14" height="1.1" fill="#333"/>
<rect x="494" y="92" width="10" height="1.1" fill="#333"/>
<rect x="518" y="80" width="14" height="1.1" fill="#333"/>
<rect x="522" y="84" width="10" height="1.1" fill="#333"/>
<rect x="518" y="88" width="14" height="1.1" fill="#333"/>
<rect x="522" y="92" width="10" height="1.1" fill="#333"/>
<rect x="547" y="80" width="14" height="1.1" fill="#333"/>
<rect x="555" y="84" width="6" height="1.1" fill="#333"/>
<rect x="555" y="88" width="6" height="1.1" fill="#333"/>
<rect x="547" y="92" width="14" height="1.1" fill="#333"/>
<path d="M555 86.5 H548 M550.5 84 L548 86.5 L550.5 89" fill="none" stroke="#1a86d0" stroke-width="1.2"/>
<rect x="573" y="80" width="14" height="1.1" fill="#333"/>
<rect x="581" y="84" width="6" height="1.1" fill="#333"/>
<rect x="581" y="88" width="6" height="1.1" fill="#333"/>
<rect x="573" y="92" width="14" height="1.1" fill="#333"/>
<path d="M573 86.5 H580 M577.5 84 L580 86.5 L577.5 89" fill="none" stroke="#1a86d0" stroke-width="1.2"/>
<text x="611" y="55" font-size="9.5" fill="#333">ab</text><text x="611" y="62" font-size="9.5" fill="#333">c</text>
<path d="M624 55 Q625.5 60 618.5 59.5 M620.5 57 L618 59.5 L620.5 62" fill="none" stroke="#1a86d0" stroke-width="1.2"/>
<text x="629.4" y="60" font-size="12.0" fill="#242424" text-anchor="start" >Quebrar Texto Automaticamente</text>
<rect x="609.5" y="79.5" width="14" height="14" fill="none" stroke="#333" stroke-width="1"/>
<path d="M616.5 80 V82 M616.5 91 V93" stroke="#333" stroke-width="1"/>
<rect x="609.5" y="82.5" width="14" height="8" fill="#fff" stroke="#1a86d0" stroke-width="1.1"/>
<path d="M611.5 86.5 H621.5 M613.5 84.5 L611.5 86.5 L613.5 88.5 M619.5 84.5 L621.5 86.5 L619.5 88.5" fill="none" stroke="#1a86d0" stroke-width="1.1"/>
<text x="629.4" y="92" font-size="11.5" fill="#242424" text-anchor="start" >Mesclar e Centralizar</text>
<path d="M750.5 85.5 L753.5 88.5 L756.5 85.5" fill="none" stroke="#333" stroke-width="1.1"/>
<rect x="827.5" y="43.5" width="145" height="23" rx="3.5" fill="#fff" stroke="#c9c9c9"/>
<text x="830.6" y="58.5" font-size="11.0" fill="#242424" text-anchor="start" >Geral</text>
<path d="M963 54 L966.0 57 L969 54" fill="none" stroke="#333" stroke-width="1.1"/>
<rect x="831.5" y="82.5" width="15" height="8" fill="none" stroke="#333" stroke-width="1.1"/>
<text x="833" y="89.5" font-size="6.5" fill="#333">CR</text>
<path d="M839.5 86.5 h6 v7 a3 1.5 0 0 1 -6 0 Z" fill="#fff" stroke="#e07b10" stroke-width="1.3"/>
<ellipse cx="842.5" cy="86.5" rx="3" ry="1.3" fill="#fff" stroke="#e07b10" stroke-width="1.2"/>
<path d="M854.5 86 L857.5 89 L860.5 86" fill="none" stroke="#333" stroke-width="1.1"/>
<text x="872" y="94" font-size="16.5" fill="#333" text-anchor="start" >%</text>
<text x="898" y="90.5" font-size="8.8" fill="#666" text-anchor="start" >000</text>
<g shape-rendering="crispEdges">
<rect x="920" y="75" width="1" height="24" fill="#d2d2d2" />
</g>
<path d="M934 83 H928 M930.5 80.5 L928 83 L930.5 85.5" fill="none" stroke="#1a86d0" stroke-width="1.2"/>
<text x="935" y="86.5" font-size="8.5" fill="#333" text-anchor="start" >,0</text>
<text x="930" y="94.5" font-size="8.5" fill="#333" text-anchor="start" >,00</text>
<path d="M954 91 H960 M957.5 88.5 L960 91 L957.5 93.5" fill="none" stroke="#1a86d0" stroke-width="1.2"/>
<text x="955" y="86.5" font-size="8.5" fill="#333" text-anchor="start" >,00</text>
<text x="959" y="94.5" font-size="8.5" fill="#333" text-anchor="start" >,0</text>
<rect x="1015" y="43" width="28" height="22" fill="#fff"/>
<path d="M1015.5 43.5 H1042.5 V64.5 H1015.5 Z M1015.5 50.5 H1042.5 M1015.5 57.5 H1042.5 M1037.5 43.5 V64.5 M1020.5 43.5 V64.5" fill="none" stroke="#3a3a3a" stroke-width="1"/>
<rect x="1020.5" y="43.5" width="13" height="7" fill="#f9a3ad" stroke="#d9232e" stroke-width="1.2"/>
<rect x="1020.5" y="50.5" width="8" height="7" fill="#7db8e8" stroke="#0f6cbd" stroke-width="1.2"/>
<rect x="1020.5" y="57.5" width="14.5" height="7" fill="#f9a3ad" stroke="#d9232e" stroke-width="1.2"/>
<text x="997" y="85" font-size="11.5" fill="#242424" text-anchor="start" >Formatação</text>
<text x="991.8" y="101" font-size="11.5" fill="#242424" text-anchor="start" >Condicional</text>
<path d="M1058 95.5 L1060.5 98.0 L1063 95.5" fill="none" stroke="#333" stroke-width="1.1"/>
<rect x="1100" y="43" width="28" height="22" fill="#fafafa"/>
<rect x="1109" y="50.5" width="18.5" height="14" fill="#8fc3ee"/>
<path d="M1100.5 43.5 H1127.5 V64.5 M1109 64.5 H1100.5 V43.5 M1100.5 50.5 H1127.5 M1100.5 57.5 H1127.5 M1109 43.5 V64.5 M1118.5 43.5 V64.5" fill="none" stroke="#3a3a3a" stroke-width="1"/>
<path d="M1109 50.5 H1127.5 V64.5 H1109 Z M1109 57.5 H1127.5 M1118.5 50.5 V64.5" fill="none" stroke="#0f6cbd" stroke-width="1.1"/>
<path d="M1119 60 L1129 49.5 Q1131 47.5 1130 46.8 Q1129 46.2 1127 48.2 L1117 58.5 Z" fill="#fff" stroke="#444" stroke-width="0.9"/>
<path d="M1116.5 58 Q1119.5 58.5 1120 61.5 Q1118 68.5 1108 68 Q1112.5 66 1112 63 Q1112 58.5 1116.5 58 Z" fill="#5aa0dc" stroke="#0f6cbd" stroke-width="0.9"/>
<text x="1073" y="85" font-size="11.5" fill="#242424" text-anchor="start" >Formatar como</text>
<text x="1092.4" y="101" font-size="11.5" fill="#242424" text-anchor="start" >Tabela</text>
<path d="M1129.5 95.5 L1132.0 98.0 L1134.5 95.5" fill="none" stroke="#333" stroke-width="1.1"/>
<rect x="1161.5" y="43.5" width="229" height="61" rx="4" fill="#fff" stroke="#d6d6d6"/>
<g shape-rendering="crispEdges">
<rect x="1376" y="44" width="1" height="60" fill="#e3e3e3" />
<rect x="1377" y="64" width="13" height="1" fill="#e3e3e3" />
<rect x="1377" y="84" width="13" height="1" fill="#e3e3e3" />
</g>
<text x="1170.2" y="64" font-size="13.7" fill="#1f1f1f" text-anchor="start" >Moeda 2</text>
<rect x="1269.5" y="46.5" width="105" height="26" fill="#fff" stroke="#8a8a8a" stroke-width="1"/>
<rect x="1271" y="48" width="102" height="23" fill="none" stroke="#c4c4c4" stroke-width="2"/>
<text x="1276.4" y="64" font-size="13.9" fill="#1f1f1f" text-anchor="start" >Normal</text>
<rect x="1166" y="77" width="100" height="22" fill="#c6efce"/>
<text x="1170.2" y="91.8" font-size="13.4" fill="#006100" text-anchor="start" >Bom</text>
<rect x="1272" y="77" width="100" height="22" fill="#ffeb9c"/>
<text x="1276.4" y="91.8" font-size="14.2" fill="#9c5700" text-anchor="start" >Neutro</text>
<path d="M1380.5 56 L1383 53.5 L1385.5 56" fill="none" stroke="#b0b0b0" stroke-width="1"/>
<path d="M1380.5 73.5 L1383.0 76.0 L1385.5 73.5" fill="none" stroke="#444" stroke-width="1.1"/>
<path d="M1380 89.5 H1386 M1380.5 92 L1383 94.5 L1385.5 92" fill="none" stroke="#444" stroke-width="1"/>
<rect x="6.5" y="139.5" width="101" height="25" rx="4" fill="#fff" stroke="#d0d0d0"/>
<text x="13" y="157" font-size="12.8" fill="#1f1f1f" text-anchor="start" >A27</text>
<path d="M92.5 151 L97.0 156 L101.5 151" fill="none" stroke="#333" stroke-width="1.3"/>
<rect x="117" y="146.5" width="2" height="2" fill="#8a8a8a"/>
<rect x="117" y="150.5" width="2" height="2" fill="#8a8a8a"/>
<rect x="117" y="154.5" width="2" height="2" fill="#8a8a8a"/>
<rect x="128.5" y="139.5" width="73" height="25" rx="4" fill="#fff" stroke="#d0d0d0"/>
<path d="M135 146 L147 158 M147 146 L135 158" stroke="#b4b4b4" stroke-width="1.2"/>
<path d="M157 153 L162 158 L173 146" fill="none" stroke="#b4b4b4" stroke-width="1.2"/>
<text x="182.5" y="157.5" font-size="17.5" style="font-family:'Liberation Serif',serif;font-style:italic" fill="#333">fx</text>
<rect x="206.5" y="139.5" width="1220" height="25" rx="4" fill="#fff" stroke="#d0d0d0"/>
<g shape-rendering="crispEdges">
<rect x="0" y="931" width="1403" height="32" fill="#f0f0f0" />
<rect x="24" y="931" width="1379" height="1" fill="#dedede" />
<rect x="0" y="963" width="1403" height="1" fill="#c8c8c8" />
<rect x="0" y="964" width="1403" height="6" fill="#f3f3f3" />
<rect x="202" y="938" width="1" height="18" fill="#cfcfcf" />
<rect x="257" y="938" width="1" height="18" fill="#cfcfcf" />
<rect x="322" y="938" width="1" height="18" fill="#cfcfcf" />
<rect x="418" y="938" width="1" height="18" fill="#cfcfcf" />
</g>
<path d="M32.5 942 L27.5 946.5 L32.5 951" fill="none" stroke="#9a9a9a" stroke-width="1.1"/>
<path d="M60 942 L65 946.5 L60 951" fill="none" stroke="#9a9a9a" stroke-width="1.1"/>
<text x="125.3" y="951.5" font-size="13.4" fill="#333" text-anchor="start" >Requisitos</text>
<rect x="207" y="935" width="46" height="24" rx="5" fill="#106178"/>
<text x="216.8" y="951.5" font-size="12.0" fill="#ffffff" text-anchor="start" >Base</text>
<path d="M259 930.5 Q262 931.5 262 935 V954 Q262 959.5 267 959.5 H313 Q318 959.5 318 954 V935 Q318 931.5 321 930.5" fill="#fff" stroke="#d8d8d8"/>
<rect x="262.5" y="930" width="55" height="3" fill="#fff"/>
<text x="270.2" y="948.7" font-size="13.8" fill="#1a1a1a" font-weight="bold" text-anchor="start" >Apoio</text>
<rect x="270" y="954" width="40" height="2" fill="#107c41"/>
<text x="337.6" y="951.5" font-size="13.5" fill="#333" text-anchor="start" >Dashboard</text>
<path d="M466.5 941 V952 M461 946.5 H472" stroke="#333" stroke-width="1.1"/>
<rect x="1152" y="942" width="2" height="2" fill="#8a8a8a"/>
<rect x="1152" y="946" width="2" height="2" fill="#8a8a8a"/>
<rect x="1152" y="950" width="2" height="2" fill="#8a8a8a"/>
<rect x="1169" y="939" width="260" height="16" rx="8" fill="#f7f7f7"/>
<path d="M1181 943 L1174 947.5 L1181 952 Z" fill="#666"/>
<rect x="1268" y="943" width="200" height="9" rx="4.5" fill="#707070"/>
<circle cx="66" cy="969.6" r="2.1" fill="none" stroke="#222" stroke-width="1.3"/>
<rect x="60" y="968.8" width="2.6" height="1.2" fill="#222"/><rect x="69.4" y="968.8" width="2.6" height="1.2" fill="#222"/>
</svg>
</body></html>
